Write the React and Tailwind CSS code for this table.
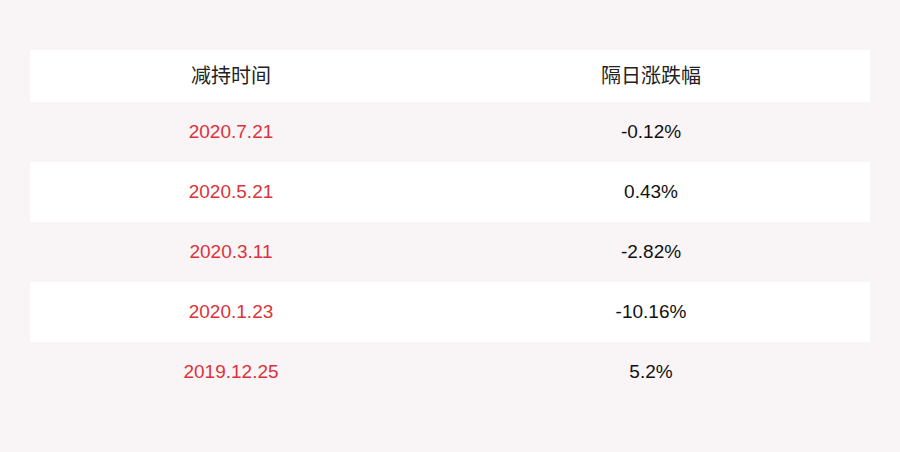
import React from 'react'

const ROWS = [
  ['2020.7.21', '-0.12%'],
  ['2020.5.21', '0.43%'],
  ['2020.3.11', '-2.82%'],
  ['2020.1.23', '-10.16%'],
  ['2019.12.25', '5.2%'],
]

export default function App() {
  return (
    <div
      className="w-[900px] h-[452px] bg-[#f9f5f6] pt-[50px] px-[30px]"
      style={{ fontFamily: '"Liberation Sans", "Noto Sans CJK SC", sans-serif' }}
    >
      <div className="grid grid-cols-[402px_1fr] h-[52px] bg-white items-center text-[20px] text-[#222]">
        <div className="text-center">减持时间</div>
        <div className="text-center">隔日涨跌幅</div>
      </div>
      {ROWS.map(([date, pct], i) => (
        <div
          key={date}
          className={`grid grid-cols-[402px_1fr] h-[60px] items-center text-[19px] ${i % 2 === 0 ? 'bg-[#f9f5f6]' : 'bg-white'}`}
        >
          <div className="text-center text-[#dc323a]">{date}</div>
          <div className="text-center text-[#111]">{pct}</div>
        </div>
      ))}
    </div>
  )
}
